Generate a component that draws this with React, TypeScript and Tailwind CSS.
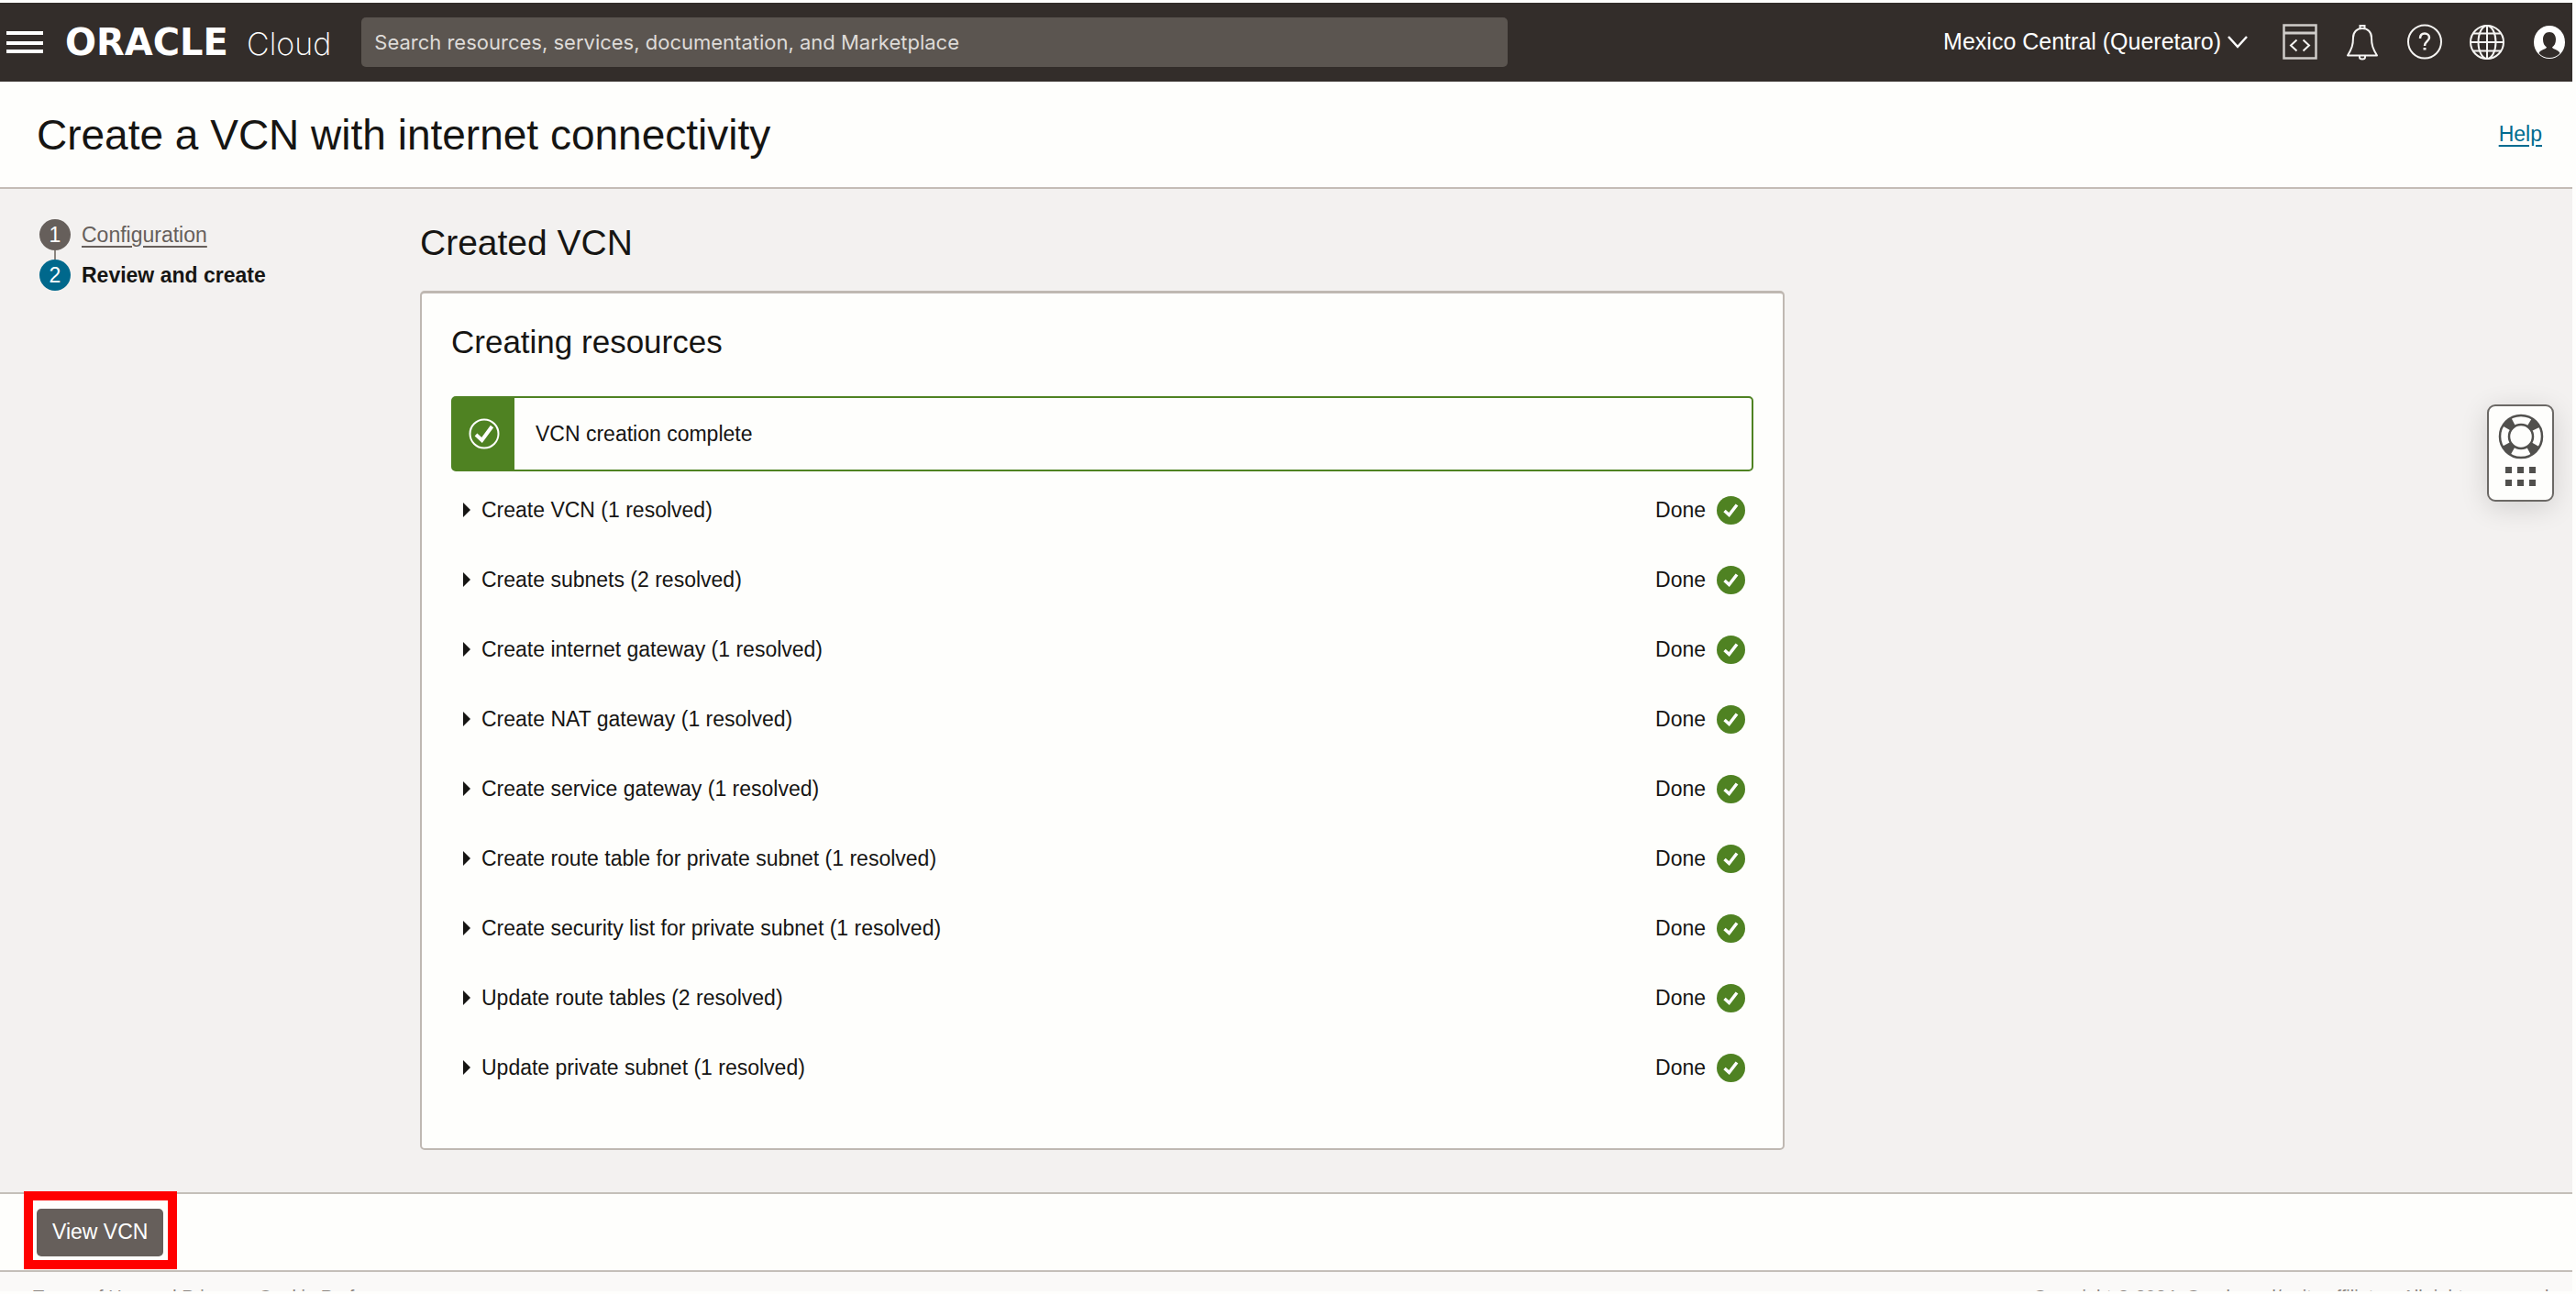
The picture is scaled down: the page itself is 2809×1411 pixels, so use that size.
import type { ReactNode } from "react";

const tasks = [
  "Create VCN (1 resolved)",
  "Create subnets (2 resolved)",
  "Create internet gateway (1 resolved)",
  "Create NAT gateway (1 resolved)",
  "Create service gateway (1 resolved)",
  "Create route table for private subnet (1 resolved)",
  "Create security list for private subnet (1 resolved)",
  "Update route tables (2 resolved)",
  "Update private subnet (1 resolved)",
];

function IconButton({ label, children }: { label: string; children: ReactNode }) {
  return (
    <button type="button" aria-label={label} className="flex w-[38px] justify-center">
      <svg viewBox="0 0 38 40" width="38" height="40" fill="none" stroke="#f5f4f2" strokeWidth="2">
        {children}
      </svg>
    </button>
  );
}

function TopBar() {
  return (
    <header className="flex h-[86px] items-center bg-[#332d2a] pr-[6px] pl-[7px] text-white">
      <button type="button" aria-label="Open navigation menu" className="shrink-0">
        <svg viewBox="0 0 40 24" width="40" height="24" fill="#fff">
          <path d="M0 0h40v4H0zM0 11h40v4H0zM0 20h40v4H0z" />
        </svg>
      </button>
      <a href="#home" className="ml-6 flex shrink-0 items-baseline">
        <span className="w-[198px] font-['DejaVu_Sans'] text-[40px] leading-none font-bold">ORACLE</span>
        <span className="font-[Inter] text-[34px] leading-none font-extralight">Cloud</span>
      </a>
      <input
        type="text"
        aria-label="Search"
        placeholder="Search resources, services, documentation, and Marketplace"
        className="ml-[33px] h-[54px] w-[1250px] rounded-[5px] bg-[#5b5550] px-[14px] font-[Inter] text-[22px] text-[#dedbd8] placeholder:text-[#dedbd8]"
      />
      <button type="button" className="ml-auto flex shrink-0 items-center gap-[7px] text-[25px]">
        Mexico Central (Queretaro)
        <svg viewBox="0 0 22 14" width="22" height="14" fill="none" stroke="#fff" strokeWidth="2.5">
          <path d="M1 1l10 11L21 1" />
        </svg>
      </button>
      <div className="ml-[38px] flex shrink-0 gap-[30px]">
        <IconButton label="Developer tools">
          <path d="M1.500 1.500h35v36h-35z" stroke="#cfccc9" strokeWidth="2.500" />
          <path d="M1.500 10h35" stroke="#cfccc9" strokeWidth="3" />
          <path d="M15.500 17.500l-6.500 6 6.500 6M22.500 17.500l6.500 6-6.500 6" />
        </IconButton>
        <IconButton label="Announcements">
          <path d="M16.500 5.500V2h5v3.500M16 35v1.500c0 1.500 1 2 3 2s3-.500 3-2V35" />
          <path d="M19 5c-6 0-10 4-10 10 0 8-1.500 12-6 19.500h32C30.500 27 29 23 29 15c0-6-4-10-10-10z" strokeLinejoin="round" />
        </IconButton>
        <IconButton label="Help center">
          <circle cx="19" cy="19.500" r="18" />
          <path d="M14 16c0-3.500 2-5.500 5-5.500s5 2 5 4.500c0 4-5 4-5 9" strokeWidth="2.500" />
          <path d="M17.500 26h3v2.500h-3z" fill="#f5f4f2" stroke="none" />
        </IconButton>
        <IconButton label="Language">
          <circle cx="19" cy="20" r="18" />
          <ellipse cx="19" cy="20" rx="9.500" ry="18" />
          <path d="M19 2v36M1 20h36M4 10.500h30M4 29.500h30" />
        </IconButton>
        <IconButton label="Profile">
          <ellipse cx="19" cy="20" rx="17" ry="18" fill="#fff" stroke="none" />
          <path
            d="M19 9c-4.500 0-7 3.500-7 8 0 4 1.500 7 4 8.500-.500 2.500-6.500 2-8.500 6.500 3 3.500 7 5 11.500 5s8.500-1.500 11.500-5c-2-4.500-8-4-8.500-6.500 2.500-1.500 4-4.500 4-8.500 0-4.500-2.500-8-7-8z"
            fill="#332d2a"
            stroke="none"
          />
        </IconButton>
      </div>
    </header>
  );
}

function Steps() {
  return (
    <nav aria-label="Progress" className="w-[415px] shrink-0 pt-[33px] text-[23px]">
      <ol>
        <li className="flex h-11 items-start gap-3">
          <span className="flex flex-col items-center">
            <span className="flex size-[34px] items-center justify-center rounded-full bg-[#665f5b] text-white">1</span>
            <span className="h-[10px] w-[2px] bg-[#8b8580]" />
          </span>
          <a href="#configuration" className="leading-[34px] text-[#665f5b] underline underline-offset-4">
            Configuration
          </a>
        </li>
        <li className="flex items-start gap-3" aria-current="step">
          <span className="flex size-[34px] items-center justify-center rounded-full bg-[#00688c] text-white">2</span>
          <span className="leading-[34px] font-bold">Review and create</span>
        </li>
      </ol>
    </nav>
  );
}

function TaskRow({ label }: { label: string }) {
  return (
    <li className="flex h-[76px] items-center justify-between pr-[9px] pl-[13px]">
      <button type="button" aria-expanded="false" className="flex items-center gap-3">
        <svg viewBox="0 0 8 16" width="8" height="16" fill="#161513">
          <path d="M0 0l8 8-8 8z" />
        </svg>
        {label}
      </button>
      <span className="flex items-center gap-3">
        Done
        <svg viewBox="0 0 31 31" width="31" height="31">
          <circle cx="15.500" cy="15.500" r="15.500" fill="#4f8222" />
          <path d="M8.500 16l5 4.500 8.500-11" fill="none" stroke="#fff" strokeWidth="3.500" />
        </svg>
      </span>
    </li>
  );
}

function SupportWidget() {
  return (
    <button
      type="button"
      aria-label="Support"
      className="absolute top-[235px] right-[20px] flex h-[106px] w-[73px] flex-col items-center gap-2 rounded-[9px] border-2 border-[#6b6865] bg-[#fefefc] pt-2 shadow-[0_6px_30px_rgba(0,0,0,0.14)]"
    >
      <svg viewBox="0 0 50 50" width="50" height="50" fill="none" stroke="#51504d">
        <circle cx="25" cy="25" r="18" strokeWidth="11" strokeDasharray="10 18.270" strokeDashoffset="-9.140" />
        <circle cx="25" cy="25" r="23" strokeWidth="2.500" />
        <circle cx="25" cy="25" r="13" strokeWidth="2.500" />
      </svg>
      <svg viewBox="0 0 33 22" width="33" height="22" fill="#51504d">
        <path d="M0 0h7v7H0zM13 0h7v7h-7zM26 0h7v7h-7zM0 14h7v7H0zM13 14h7v7h-7zM26 14h7v7h-7z" />
      </svg>
    </button>
  );
}

export default function App() {
  return (
    <div className="h-screen bg-[#fefefc] py-[3px] pr-1 font-['Liberation_Sans',sans-serif] text-[23px] text-[#161513]">
      <div className="h-full overflow-hidden">
        <TopBar />
        <div className="flex h-[117px] items-center justify-between border-b-2 border-[#c4bcb6] pr-[33px] pl-[40px]">
          <h1 className="text-[46px] leading-none">Create a VCN with internet connectivity</h1>
          <a href="#help" className="text-[#006b8f] underline underline-offset-4">Help</a>
        </div>

        <main className="relative flex bg-[#f3f1f0] pb-[46px] pl-[43px]">
          <Steps />
          <div className="w-[1488px]">
            <h2 className="pt-[37px] text-[39px] leading-[44px]">Created VCN</h2>
            <section className="mt-[30px] rounded-[5px] border-2 border-t-[3px] border-[#bfb8b2] bg-[#fefefc] px-[32px] pt-[33px] pb-[50px]">
              <h3 className="text-[35px] leading-[40px]">Creating resources</h3>
              <div role="status" className="mt-[39px] flex h-[82px] items-center rounded-[5px] border-2 border-[#4f8222]">
                <span className="flex w-[67px] items-center justify-center self-stretch bg-[#4f8222]">
                  <svg viewBox="0 0 34 34" width="34" height="34" fill="none" stroke="#fff">
                    <circle cx="17" cy="17" r="15.500" strokeWidth="2" />
                    <path d="M8 18l6.500 6L25.500 9" strokeWidth="4" />
                  </svg>
                </span>
                <span className="pl-[23px]">VCN creation complete</span>
              </div>
              <ul className="mt-1">
                {tasks.map((task) => (
                  <TaskRow key={task} label={task} />
                ))}
              </ul>
            </section>
          </div>
          <SupportWidget />
        </main>

        <div className="flex h-[87px] items-center border-y-2 border-[#c4bfb9] pl-[40px]">
          <div className="relative">
            <button type="button" className="h-[52px] rounded-[5px] bg-[#665f5b] px-[17px] text-white">
              View VCN
            </button>
            <div className="pointer-events-none absolute -top-[19px] -right-[15px] -bottom-[14px] -left-[14px] border-[10px] border-[#ff0000]" />
          </div>
        </div>

        <footer className="flex justify-between bg-[#faf9f8] pt-[15px] pr-[20px] pl-[36px] text-[20px] leading-6 text-[#8b8580]">
          <div className="flex gap-[18px]">
            <a href="#terms">Terms of Use and Privacy</a>
            <a href="#cookies">Cookie Preferences</a>
          </div>
          <p>Copyright © 2024, Oracle and/or its affiliates. All rights reserved.</p>
        </footer>
      </div>
    </div>
  );
}
